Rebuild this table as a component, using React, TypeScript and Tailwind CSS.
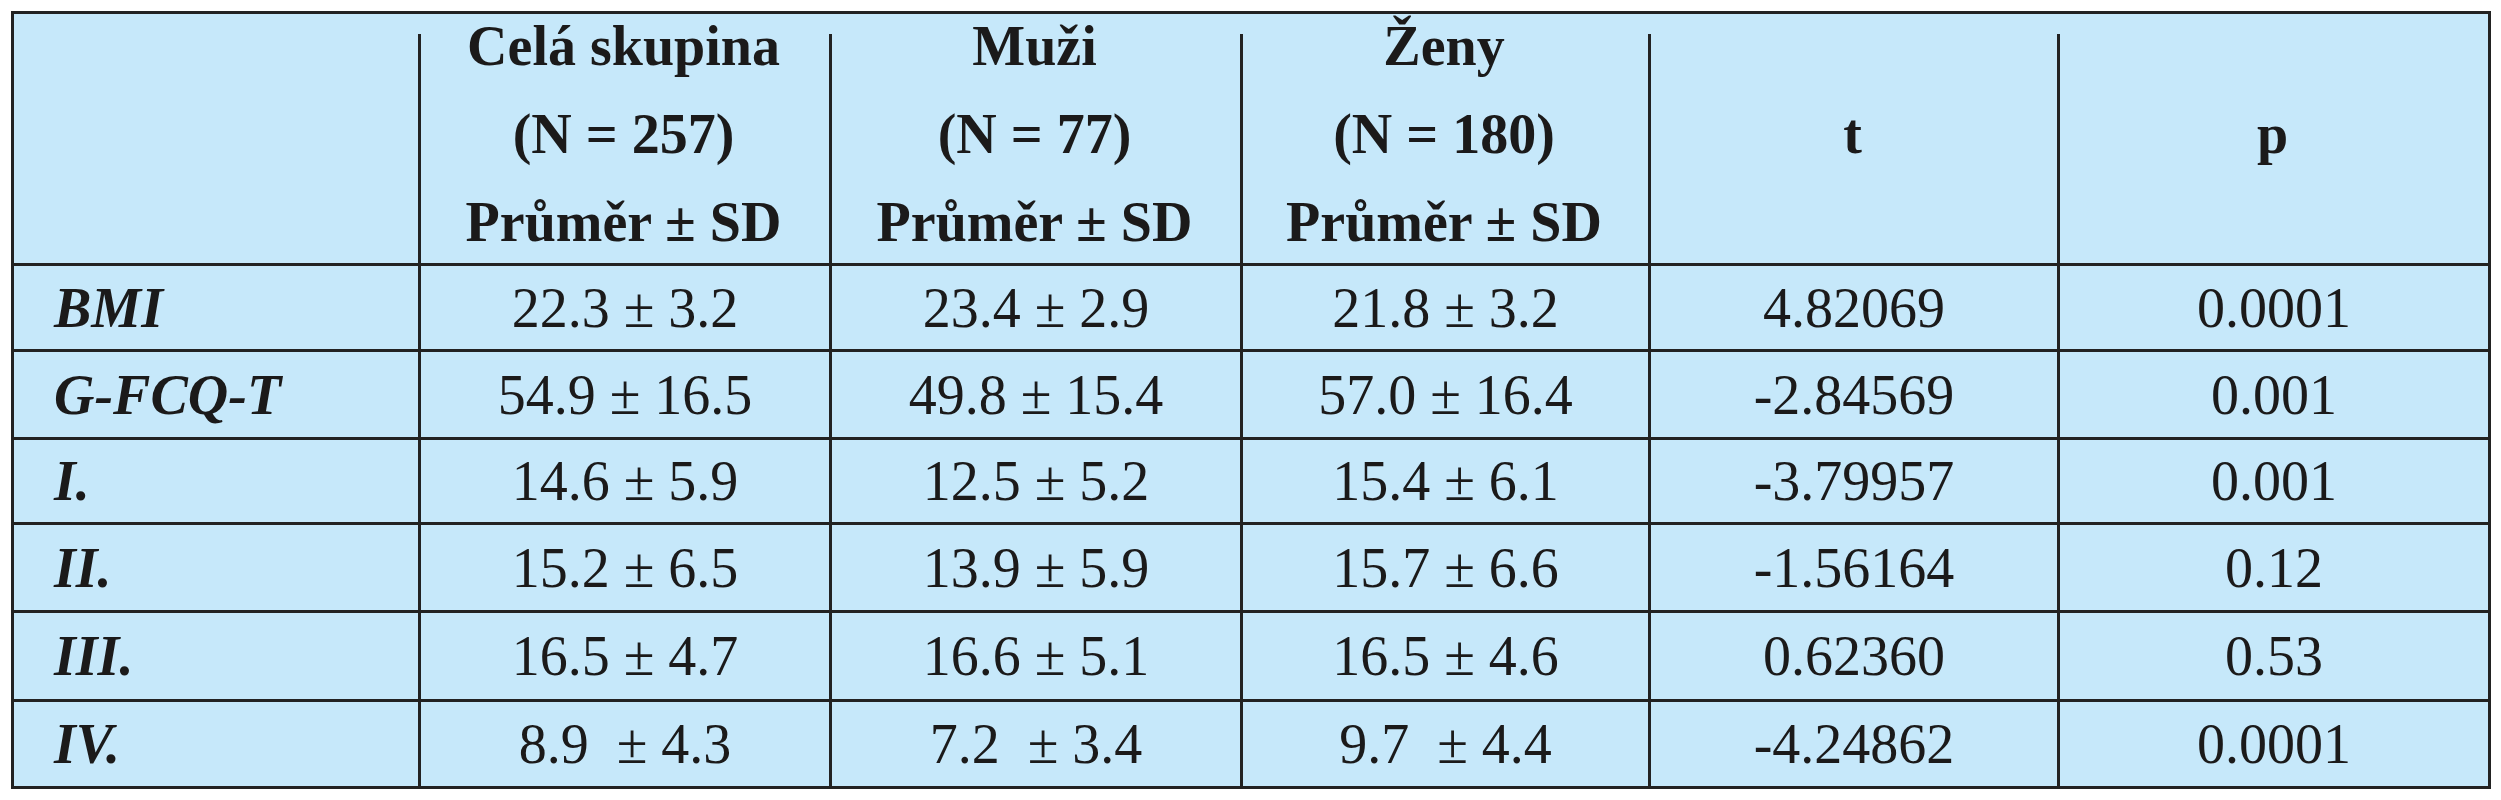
import React from "react";

type Row = { label: string; h: string; vals: string[] };

const rows: Row[] = [
  { label: "BMI", h: "h-[86px]", vals: ["22.3 ± 3.2", "23.4 ± 2.9", "21.8 ± 3.2", "4.82069", "0.0001"] },
  { label: "G-FCQ-T", h: "h-[88px]", vals: ["54.9 ± 16.5", "49.8 ± 15.4", "57.0 ± 16.4", "-2.84569", "0.001"] },
  { label: "I.", h: "h-[85px]", vals: ["14.6 ± 5.9", "12.5 ± 5.2", "15.4 ± 6.1", "-3.79957", "0.001"] },
  { label: "II.", h: "h-[88px]", vals: ["15.2 ± 6.5", "13.9 ± 5.9", "15.7 ± 6.6", "-1.56164", "0.12"] },
  { label: "III.", h: "h-[89px]", vals: ["16.5 ± 4.7", "16.6 ± 5.1", "16.5 ± 4.6", "0.62360", "0.53"] },
  { label: "IV.", h: "h-[87px]", vals: ["8.9\u00a0 ± 4.3", "7.2\u00a0 ± 3.4", "9.7\u00a0 ± 4.4", "-4.24862", "0.0001"] },
];

const widths = ["w-[411px]", "w-[411px]", "w-[408px]", "w-[409px]", "w-[431px]"];

const headers: string[][] = [
  ["Celá skupina", "(N = 257)", "Průměr ± SD"],
  ["Muži", "(N = 77)", "Průměr ± SD"],
  ["Ženy", "(N = 180)", "Průměr ± SD"],
  ["t"],
  ["p"],
];

const hdrLine =
  "before:content-[''] before:absolute before:left-0 before:top-[20px] before:bottom-0 before:w-[3px] before:bg-[#222]";

export default function App() {
  return (
    <div className="w-[2501px] h-[800px] bg-white pt-[11px] pl-[11px] font-['Liberation_Serif','Times_New_Roman',serif] text-[#1b1a1a] text-[56px]">
      <div className="w-[2480px] border-[3px] border-[#222] bg-[#c6e8fa]">
        <div className="flex h-[249px]">
          <div className="w-[404px]" />
          {headers.map((lines, i) => (
            <div
              key={i}
              className={`relative ${widths[i]} ${hdrLine} flex flex-col items-center justify-center pb-[10px] leading-[88px] font-bold text-center whitespace-nowrap`}
            >
              {lines.map((l, j) => (
                <div key={j}>{l}</div>
              ))}
            </div>
          ))}
        </div>
        {rows.map((r) => (
          <div key={r.label} className={`flex ${r.h} border-t-[3px] border-[#222]`}>
            <div className="w-[404px] pl-[40px] flex items-center font-bold italic whitespace-nowrap">
              {r.label}
            </div>
            {r.vals.map((v, i) => (
              <div
                key={i}
                className={`${widths[i]} border-l-[3px] border-[#222] flex items-center justify-center whitespace-pre`}
              >
                {v}
              </div>
            ))}
          </div>
        ))}
      </div>
    </div>
  );
}
